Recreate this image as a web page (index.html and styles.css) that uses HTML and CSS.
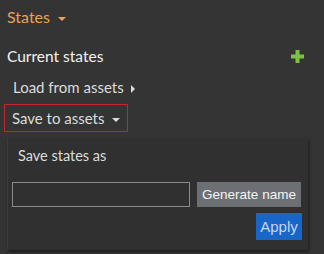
FILE: index.html
```html
<!DOCTYPE html>
<html lang="en">
<head>
    <meta charset="UTF-8">
    <title>States</title>
    <link rel="stylesheet" href="styles.css">
</head>
<body>
    <div class="sidebar">
        <div class="section-title">States <span class="caret-down orange"></span></div>

        <div class="row-header">
            <span class="heading">Current states</span>
            <svg class="plus" width="13" height="13" viewBox="0 0 13 13">
                <path d="M4.5 0h4v4.5h4.5v4h-4.5v4.5h-4v-4.5h-4.5v-4h4.5z" fill="#7cc242"/>
            </svg>
        </div>

        <div class="menu-item">Load from assets <span class="caret-right"></span></div>
        <div class="menu-item active">Save to assets <span class="caret-down"></span></div>

        <div class="panel">
            <div class="panel-label">Save states as</div>
            <div class="name-row">
                <input class="name-input" type="text">
                <button class="btn btn-grey">Generate name</button>
            </div>
            <div class="apply-row">
                <button class="btn btn-blue">Apply</button>
            </div>
        </div>
    </div>
</body>
</html>
```
FILE: styles.css
```css
* {
    margin: 0;
    padding: 0;
    box-sizing: border-box;
}

body {
    background: #343434;
    font-family: Lato, 'Open Sans', sans-serif;
    color: #e6e6e6;
    width: 324px;
    height: 254px;
    overflow: hidden;
}

.sidebar {
    padding-top: 6px;
}

.section-title {
    color: #e7a35c;
    font-size: 16px;
    padding-left: 7px;
    height: 22px;
    line-height: 22px;
}

.caret-down,
.caret-right {
    display: inline-block;
    width: 0;
    height: 0;
    vertical-align: middle;
    margin-left: 4px;
}

.caret-down {
    border-left: 4px solid transparent;
    border-right: 4px solid transparent;
    border-top: 4px solid #dcdcdc;
}

.caret-down.orange {
    border-top-color: #e7a35c;
}

.caret-right {
    border-top: 4px solid transparent;
    border-bottom: 4px solid transparent;
    border-left: 4px solid #dcdcdc;
}

.row-header {
    display: flex;
    justify-content: space-between;
    align-items: center;
    margin-top: 16px;
    padding: 0 20px 0 7px;
    height: 24px;
}

.heading {
    font-size: 15.5px;
    color: #f2f2f2;
}

.menu-item {
    display: block;
    width: fit-content;
    white-space: nowrap;
    font-size: 15px;
    color: #dcdcdc;
    margin-left: 5px;
    margin-top: 6px;
    padding: 0 7px;
    height: 26px;
    line-height: 24px;
    border: 1px solid transparent;
}

.menu-item.active {
    margin-left: 4px;
    margin-top: 4px;
    width: 124px;
    padding: 0 7px;
    height: 28px;
    line-height: 26px;
    border-color: #c0262c;
}

.panel {
    margin: 6px 16px 0 7px;
    background: #303030;
    border-left: 1px solid #3c3c3c;
    box-shadow: 1px 2px 3px rgba(0, 0, 0, 0.45);
    padding: 8px 6px 10px 4px;
    height: 112px;
}

.panel-label {
    font-size: 14.5px;
    color: #dcdcdc;
    padding-left: 6px;
    height: 20px;
    line-height: 20px;
}

.name-row {
    display: flex;
    gap: 7px;
    margin-top: 16px;
}

.name-input {
    width: 178px;
    height: 25px;
    background: #303030;
    border: 1px solid #8a8a8a;
    color: #eee;
    outline: none;
}

.btn {
    font-family: 'Liberation Sans', Arial, sans-serif;
    font-size: 13.5px;
    border: none;
    height: 25px;
    padding: 0;
    white-space: nowrap;
}

.btn-grey {
    background: #6c7075;
    color: #f4f4f4;
    width: 104px;
}

.btn-blue {
    background: #1966c9;
    color: #c9d6ea;
    height: 27px;
    width: 46px;
    font-size: 15px;
}

.apply-row {
    display: flex;
    justify-content: flex-end;
    margin-top: 6px;
}
```
